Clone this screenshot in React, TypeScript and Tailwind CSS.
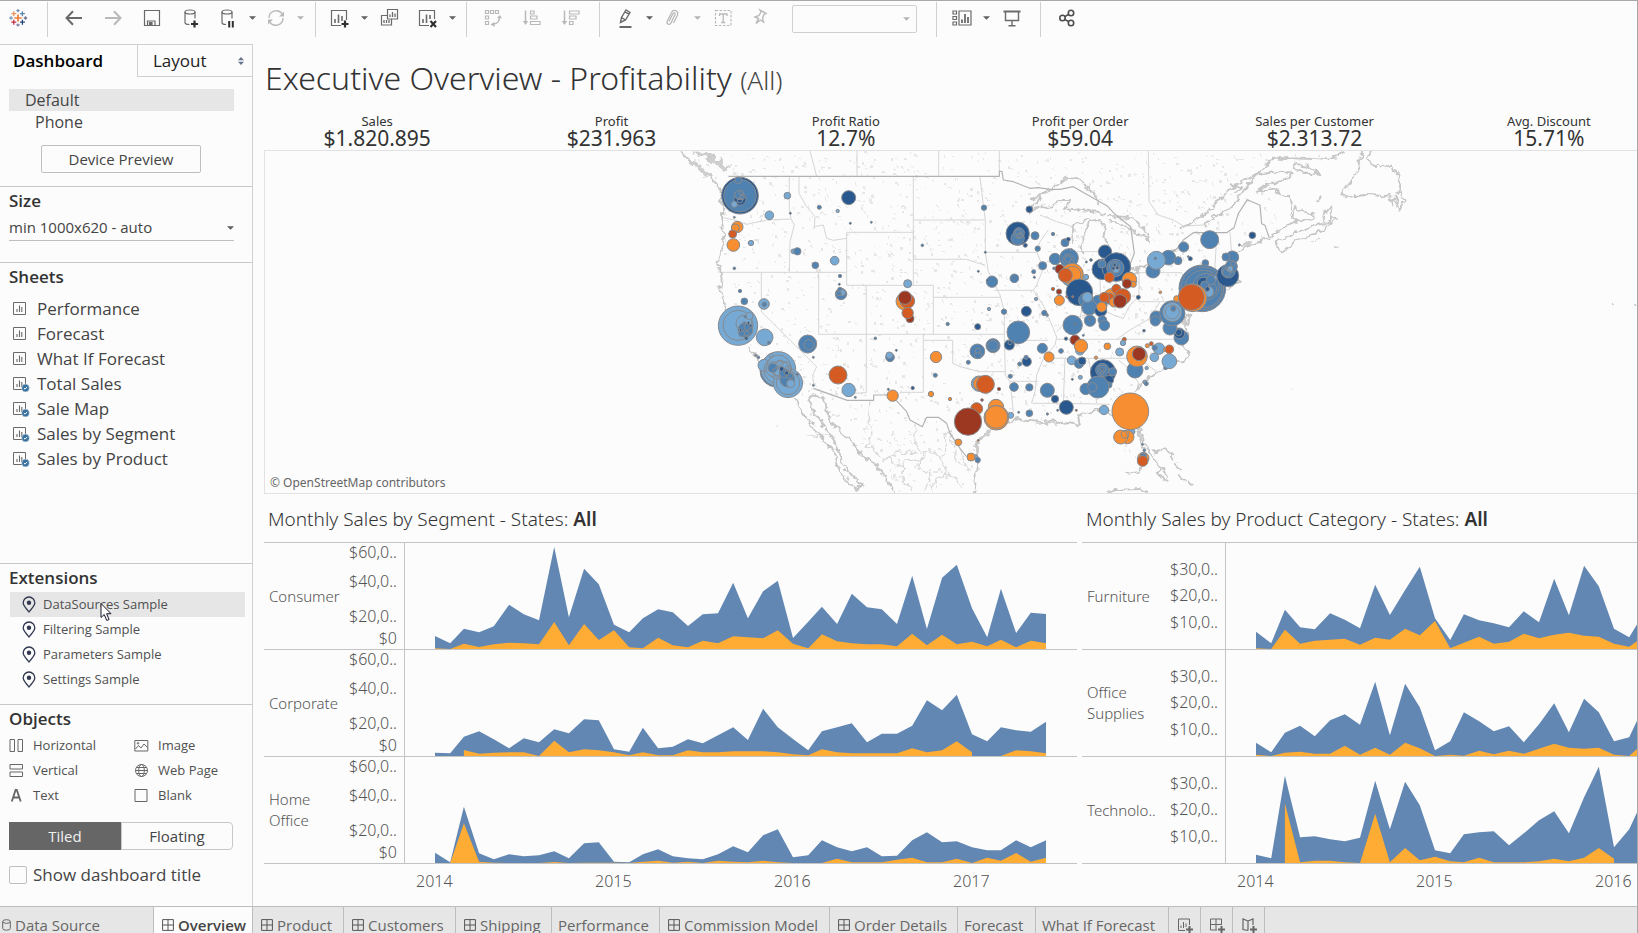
import React from "react";

/* ---------- shared pieces ---------- */

const UI = "font-['Open_Sans','Noto_Sans',sans-serif]";
const VIZ = "font-['Noto_Sans','Open_Sans',sans-serif]";

function Caret({ light = false }: { light?: boolean }) {
  return (
    <svg viewBox="0 0 8 4" className={`h-1 w-[7px] ${light ? "fill-[#b4b4b4]" : "fill-[#5f5f5f]"}`} aria-hidden="true">
      <path d="M0 0h8L4 4z" />
    </svg>
  );
}

function Icon({ children, light = false }: { children: React.ReactNode; light?: boolean }) {
  return (
    <svg
      viewBox="0 0 24 24"
      className={`h-6 w-6 fill-none ${light ? "stroke-[#b9b9b9]" : "stroke-[#6a6a6a]"}`}
      strokeWidth="1.2"
      aria-hidden="true"
    >
      {children}
    </svg>
  );
}

function Tool({ label, w = "w-9", children }: { label: string; w?: string; children: React.ReactNode }) {
  return (
    <button type="button" aria-label={label} className={`flex h-8 shrink-0 items-center justify-center ${w}`}>
      {children}
    </button>
  );
}

const GROUP = "flex h-[35px] shrink-0 items-start border-l border-[#d0d0d0]";

/* ---------- toolbar ---------- */

function Cross({ x, y, r, c, w = 1.3 }: { x: number; y: number; r: number; c: string; w?: number }) {
  return <path d={`M${x - r} ${y}h${2 * r}M${x} ${y - r}v${2 * r}`} stroke={c} strokeWidth={w} />;
}

function Toolbar() {
  return (
    <header className="flex h-[43px] shrink-0 items-start pt-px">
      <div className="flex h-8 w-[47px] shrink-0 items-center pl-1.5">
        <Icon>
          <Cross x={12} y={12} r={3.6} c="#eb7a38" w={1.7} />
          <Cross x={12} y={4.6} r={1.6} c="#6f8fb5" />
          <Cross x={12} y={19} r={1.6} c="#7b83a8" />
          <Cross x={5} y={12} r={1.7} c="#7b9bb8" />
          <Cross x={19.5} y={12} r={1.7} c="#6d7394" />
          <Cross x={7.8} y={7.7} r={2.5} c="#e8935a" />
          <Cross x={16.4} y={7.7} r={2.5} c="#5a83a8" />
          <Cross x={7.8} y={16.2} r={2.5} c="#c22d41" />
          <Cross x={16.4} y={16.2} r={2.5} c="#25497c" />
        </Icon>
      </div>

      <div className={`${GROUP} pl-1.5 pr-[9px]`}>
        <Tool label="Undo" w="w-[39px]">
          <Icon><path d="M20 12H5M11 5.2L4.5 12l6.500 6.800" strokeWidth="2" /></Icon>
        </Tool>
        <Tool label="Redo" w="w-[39px]">
          <Icon light><path d="M4 12h15M13 5.200L19.500 12 13 18.800" strokeWidth="2" /></Icon>
        </Tool>
        <Tool label="Save" w="w-[39px]">
          <Icon><path d="M4.500 4.500h15v15h-15zM7.500 19.500v-4.500h7.500v4.500" /><path d="M9.500 19.500v-3h2.500v3z" className="fill-[#6a6a6a]" /></Icon>
        </Tool>
        <Tool label="New data source" w="w-[39px]">
          <Icon>
            <ellipse cx="11" cy="6" rx="5" ry="2" />
            <path d="M6 6v10.500c0 1.200 2 2 4.500 2M16 6v6.500" />
            <path d="M15.500 14.500v7M12 18h7" className="stroke-[#303030]" strokeWidth="2.200" />
          </Icon>
        </Tool>
        <Tool label="Pause auto updates">
          <Icon>
            <ellipse cx="11" cy="6" rx="5" ry="2" />
            <path d="M6 6v10.500c0 1.200 1.500 2 4 2M16 6v6.500" />
            <path d="M13.200 15v6.500M16.800 15v6.500" className="stroke-[#303030]" strokeWidth="2" />
          </Icon>
        </Tool>
        <Tool label="Auto update options" w="w-3"><Caret /></Tool>
        <Tool label="Run update">
          <Icon light>
            <path d="M5 12a7.200 7.200 0 0 1 13-4.300M19 12a7.200 7.200 0 0 1-13 4.300" strokeWidth="1.400" />
            <path d="M20 5.500v5h-5zM4 18.500v-5h5z" className="fill-[#b9b9b9] stroke-none" />
          </Icon>
        </Tool>
        <Tool label="Update options" w="w-3"><Caret light /></Tool>
      </div>

      <div className={`${GROUP} pl-1.5 pr-2`}>
        <Tool label="New worksheet">
          <Icon>
            <path d="M18.500 14V4.500h-15v15H13" />
            <path d="M7 17v-4M10.500 17V8.500M14 15v-5" strokeWidth="1.600" />
            <path d="M17 14.500v7M13.500 18h7" className="stroke-[#303030]" strokeWidth="2.200" />
          </Icon>
        </Tool>
        <Tool label="New worksheet options" w="w-3"><Caret /></Tool>
        <Tool label="Duplicate" w="w-10">
          <Icon>
            <path d="M9.500 3.500h10v9.500h-10zM9.500 9.500h-6V19h10v-6" />
            <path d="M12 11V8.500M14.500 11V6M17 11V7.500M6 17v-3M8.500 17v-3M11 17v-3" strokeWidth="1.300" />
          </Icon>
        </Tool>
        <Tool label="Clear sheet">
          <Icon>
            <path d="M18.500 13V4.500h-15v15H13" />
            <path d="M7 17v-4M10.500 17V8.500M14 13v-4" strokeWidth="1.600" />
            <path d="M14.500 15l5.500 6M20 15l-5.500 6" className="stroke-[#303030]" strokeWidth="2.100" />
          </Icon>
        </Tool>
        <Tool label="Clear options" w="w-3"><Caret /></Tool>
      </div>

      <div className={`${GROUP} pl-1.5 pr-[9px]`}>
        <Tool label="Swap rows and columns" w="w-[39px]">
          <Icon light>
            <path d="M4.500 4.500h3v3h-3zM9.500 4.500h3v3h-3zM14.500 4.500h3v3h-3zM4.500 10h3v3h-3zM4.500 15.500h3v3h-3z" />
            <path d="M18.500 10.500c.3 4-2 7.500-7 8" strokeWidth="1.500" />
            <path d="M16 12l2.800-3 2.200 3.200zM13.500 16v5l-4-2.500z" className="fill-[#b9b9b9] stroke-none" />
          </Icon>
        </Tool>
        <Tool label="Sort ascending" w="w-[39px]">
          <Icon light>
            <path d="M5.500 4.500v13" strokeWidth="1.500" />
            <path d="M2.800 15h5.400l-2.700 4z" className="fill-[#b9b9b9] stroke-none" />
            <path d="M10.500 5h3.500v3h-3.500zM10.500 10h6.500v3h-6.500zM10.500 15.500h9.500v3h-9.500z" />
          </Icon>
        </Tool>
        <Tool label="Sort descending" w="w-[39px]">
          <Icon light>
            <path d="M5.500 4.500v13" strokeWidth="1.500" />
            <path d="M2.800 15h5.400l-2.700 4z" className="fill-[#b9b9b9] stroke-none" />
            <path d="M10.500 5h9.500v3h-9.500zM10.500 10h6.500v3h-6.500zM10.500 15.500h3.500v3h-3.500z" />
          </Icon>
        </Tool>
      </div>

      <div className={`${GROUP} pl-[7px] pr-[19px]`}>
        <Tool label="Highlight">
          <Icon>
            <path d="M7.500 16.500l1-5 4.500-7.500 4 2.500-4.500 7.500-5 2.500zM8.500 11.500l4 2.500M12 5.800l4 2.400" strokeWidth="1.400" />
            <path d="M6.500 21h12" strokeWidth="2" />
          </Icon>
        </Tool>
        <Tool label="Highlight options" w="w-3"><Caret /></Tool>
        <Tool label="Group members">
          <Icon light>
            <path d="M8 15.500l4-8c.7-1.300 2.600-.5 2 1l-4 8.500c-1.300 2.700-5 1-3.800-1.700l4.500-9C12.200 3 17.800 4.500 16.500 9l-4 8" strokeWidth="1.300" />
          </Icon>
        </Tool>
        <Tool label="Group options" w="w-3"><Caret light /></Tool>
        <Tool label="Show mark labels" w="w-10">
          <Icon light>
            <path d="M4.500 4.500h15.500v15h-15.500z" strokeDasharray="2.500 1.500" />
            <path d="M8.500 10V8h7.500v2M12.200 8v8.500M10.200 16.500h4" strokeWidth="1.300" />
          </Icon>
        </Tool>
        <Tool label="Fix axes">
          <Icon light>
            <path d="M11 4l6 3.500-2 .8-1.500 4 1 3.700-3.300-2-4.200 3.500 2.500-5-3.500-1.500 4-1.500 2-3.500z" strokeWidth="1.400" />
          </Icon>
        </Tool>
        <div className="relative ml-[13px] mt-[3px] h-7 w-[125px]">
          <select aria-label="Fit" disabled className="h-7 w-full appearance-none rounded-xs border border-[#d0d0d0] bg-[#fcfcfc]" />
          <span className="pointer-events-none absolute right-[7px] top-3"><Caret light /></span>
        </div>
      </div>

      <div className={`${GROUP} pl-[7px] pr-2`}>
        <Tool label="Show cards">
          <Icon>
            <path d="M3 5h3.500v3H3zM3 10.500h3.500v3H3zM3 16h3.500v3H3zM9 5h12v14H9z" />
            <path d="M12 17v-3.500M15 17V8M18 17v-6" strokeWidth="1.800" />
          </Icon>
        </Tool>
        <Tool label="Card options" w="w-3"><Caret /></Tool>
        <Tool label="Presentation mode" w="w-10">
          <Icon><path d="M5.500 6v8.500h13V6M12 14.500v5M8.500 19.700h7" strokeWidth="1.400" /><path d="M3.500 5.500h17" strokeWidth="2" /></Icon>
        </Tool>
      </div>

      <div className={`${GROUP} pl-1.5`}>
        <Tool label="Share" w="w-10">
          <Icon>
            <g className="stroke-[#4d4d4d]" strokeWidth="1.600">
              <circle cx="7.500" cy="12" r="2.700" /><circle cx="16" cy="7" r="2.700" /><circle cx="16" cy="17" r="2.700" />
              <path d="M9.800 10.600l4-2.300M9.800 13.400l4 2.300" />
            </g>
          </Icon>
        </Tool>
      </div>
    </header>
  );
}

/* ---------- side pane ---------- */

const SHEETS: [string, boolean][] = [
  ["Performance", false], ["Forecast", false], ["What If Forecast", false], ["Total Sales", true],
  ["Sale Map", true], ["Sales by Segment", true], ["Sales by Product", true],
];

function SheetIcon({ used }: { used: boolean }) {
  return (
    <svg viewBox="0 0 17 16" className="h-4 w-[17px] fill-none stroke-[#6a6a6a]" aria-hidden="true">
      <path d="M.5 1.500h12v12H.5z" />
      <path d="M4 11V8M6.500 11V4.500M8.800 11V6" strokeWidth="1.100" />
      {used && (
        <>
          <circle cx="12.500" cy="12" r="3.900" className="fill-[#38719f] stroke-[#fcfcfc]" strokeWidth=".5" />
          <path d="M10.900 12l1.200 1.200 2-2.300" className="stroke-white" strokeWidth="1" />
        </>
      )}
    </svg>
  );
}

function Pin() {
  return (
    <svg viewBox="0 0 14 17" className="h-[17px] w-3.5 fill-none stroke-[#30374f]" strokeWidth="1.300" aria-hidden="true">
      <path d="M7 16C5 13 1.200 10.300 1.200 6.800a5.800 5.800 0 0 1 11.600 0C12.800 10.300 9 13 7 16z" />
      <circle cx="7" cy="6.800" r="2.200" className="fill-[#30374f] stroke-none" />
    </svg>
  );
}

const OBJECT_ICONS: Record<string, React.ReactNode> = {
  Horizontal: <path d="M1 1.500h4.500v12H1zM9 1.500h4.500v12H9z" />,
  Vertical: <path d="M1 1.500h12.500V6H1zM1 9h12.500v4.500H1z" />,
  Text: <path d="M2.800 13.500L6.600 2h1.200l3.900 11.500M4.300 9.500h6" strokeWidth="1.800" />,
  Image: <><path d="M.8 2.500h13v10.500h-13z" /><path d="M1.500 11l3-3.500 2.500 2.500 3-4 3.500 3.500" /><circle cx="4" cy="5.300" r=".8" /></>,
  "Web Page": <><circle cx="7.500" cy="7.500" r="6" /><ellipse cx="7.500" cy="7.500" rx="2.800" ry="6" /><path d="M1.500 7.500h12M2.500 4.500h10M2.500 10.500h10" /></>,
  Blank: <path d="M1 1.500h12v12H1z" />,
};

function ObjectItem({ name }: { name: string }) {
  return (
    <button type="button" className="flex h-[25px] items-center gap-[9px] text-left text-[13px] text-[#505050]">
      <svg viewBox="0 0 15 15" className="h-[15px] w-[15px] fill-none stroke-[#666]" aria-hidden="true">{OBJECT_ICONS[name]}</svg>
      {name}
    </button>
  );
}

const HEAD = "text-[17px] leading-6 font-semibold text-[#333]";

function SidePane() {
  return (
    <aside className="flex w-[253px] shrink-0 flex-col border-r border-t border-[#d0d0d0]">
      <div className="flex h-8 shrink-0">
        <button type="button" className="w-[137px] pl-[13px] text-left text-[17px] font-semibold text-black">Dashboard</button>
        <button type="button" className="flex flex-1 items-center justify-between border-b border-l border-[#d0d0d0] pl-[15px] pr-2 text-[17px] text-[#222]">
          Layout
          <svg viewBox="0 0 6 8" className="h-2 w-1.5 fill-[#64748b]" aria-hidden="true"><path d="M0 3.300L3 0l3 3.300zM0 4.700L3 8l3-3.300z" /></svg>
        </button>
      </div>

      <div className="flex h-[110px] shrink-0 flex-col border-b border-[#c8c8c8] pl-[9px] pt-3 text-base text-[#444]">
        <button type="button" className="h-[22px] w-[225px] bg-[#e6e6e6] pl-4 text-left leading-[22px]">Default</button>
        <button type="button" className="h-[22px] w-[225px] pl-[26px] text-left leading-[22px]">Phone</button>
        <button type="button" className="ml-8 mt-3 h-7 w-40 rounded-xs border border-[#bfbfbf] text-[15px]">Device Preview</button>
      </div>

      <div className="h-[76px] shrink-0 border-b border-[#c8c8c8] pl-[9px] pt-0.5">
        <label htmlFor="size" className={`block ${HEAD}`}>Size</label>
        <div className="relative w-[225px]">
          <select id="size" className="h-7 w-full appearance-none border-b border-[#bfbfbf] bg-transparent pt-0.5 text-[15px] text-[#444]">
            <option>min 1000x620 - auto</option>
          </select>
          <span className="pointer-events-none absolute right-0 top-[13px]"><Caret /></span>
        </div>
      </div>

      <section className="min-h-0 flex-1 pl-[9px] pt-0.5">
        <h2 className={HEAD}>Sheets</h2>
        <ul className="pt-[7px]">
          {SHEETS.map(([name, used]) => (
            <li key={name}>
              <button type="button" className="flex h-[25px] items-center gap-[7px] pl-1 text-[17px] text-[#444]">
                <SheetIcon used={used} />{name}
              </button>
            </li>
          ))}
        </ul>
      </section>

      <section className="h-[141px] shrink-0 border-t border-[#c8c8c8] pl-2.5 pt-0.5">
        <h2 className={`-ml-px ${HEAD}`}>Extensions</h2>
        <ul className="pt-0.5">
          {["DataSources Sample", "Filtering Sample", "Parameters Sample", "Settings Sample"].map((name, i) => (
            <li key={name} className="relative">
              <button type="button" className={`flex h-[25px] w-[235px] items-center gap-[7px] pl-3 text-[13px] text-[#505050] ${i === 0 ? "bg-[#e6e6e6]" : ""}`}>
                <Pin />{name}
              </button>
              {i === 0 && (
                <svg viewBox="0 0 13 20" className="absolute left-[90px] top-2.5 h-5 w-[13px] fill-white stroke-[#1a1a2e]" aria-hidden="true">
                  <path d="M1 1.500v14l3.200-3 2.600 6 2.300-1-2.500-5.800H11z" />
                </svg>
              )}
            </li>
          ))}
        </ul>
      </section>

      <section className="h-[202px] shrink-0 border-t border-[#c8c8c8] pl-[9px] pt-0.5">
        <h2 className={HEAD}>Objects</h2>
        <div className="grid grid-cols-[125px_100px] pt-0.5">
          {["Horizontal", "Image", "Vertical", "Web Page", "Text", "Blank"].map((n) => <ObjectItem key={n} name={n} />)}
        </div>
        <div className="mt-3.5 flex h-7 w-[224px] text-[15px]">
          <button type="button" className="w-28 bg-[#666] text-[#f0f0f0]">Tiled</button>
          <button type="button" className="w-28 rounded-r-sm border border-[#c8c8c8] text-[#444]">Floating</button>
        </div>
        <label className="mt-[13px] flex items-center gap-1.5 text-[17px] leading-6 text-[#444]">
          <input type="checkbox" className="h-[18px] w-[18px] appearance-none rounded-xs border border-[#bfbfbf]" />
          Show dashboard title
        </label>
      </section>
    </aside>
  );
}

/* ---------- bubble map ---------- */

type Tone = "D" | "M" | "L" | "O" | "R" | "B" | "N";
const TONES: Record<Tone, string> = { D: "#28588e", M: "#4f81b1", L: "#76a9d3", O: "#f78f32", R: "#d45b21", B: "#9c3821", N: "none" };
type Bubble = [number, number, number, Tone];

const WEST: Bubble[] = [
  [240,152,55,"D"],[240,152,49,"M"],[235,106,10,"M"],[240,163,18,"D"],[238,150,14,"M"],[223,178,9,"L"],[243,143,6,"M"],[246,158,7,"M"],[240,166,8,"N"],
  [382,152,10,"L"],[328,211,13,"L"],[566,158,21,"D"],[478,187,6,"M"],[533,198,5,"L"],[391,205,3,"D"],[571,235,3,"D"],[634,232,3,"M"],[223,217,3,"M"],
  [232,246,17,"O"],[226,249,12,"O"],[218,267,12,"R"],[220,300,19,"O"],[273,294,8,"L"],[223,370,4,"M"],[400,319,7,"L"],[412,319,11,"M"],[466,361,10,"M"],[524,347,13,"L"],
  [540,393,5,"M"],[538,418,3,"D"],[543,447,17,"M"],[540,434,7,"M"],[547,443,9,"L"],[537,445,7,"M"],[743,416,12,"L"],[734,469,26,"O"],[742,468,22,"R"],[735,458,20,"B"],[750,521,12,"B"],[743,504,17,"R"],
  [240,438,5,"M"],[253,469,10,"M"],[312,477,16,"L"],[313,478,7,"M"],[234,542,59,"L"],[234,541,45,"L"],[252,535,24,"L"],[256,555,22,"M"],[268,513,11,"L"],[245,566,9,"M"],[262,545,10,"M"],[272,542,4,"D"],[265,534,4,"D"],[253,534,4,"M"],[256,515,4,"M"],[242,555,4,"D"],[259,580,5,"D"],[260,565,7,"M"],
  [314,577,25,"L"],[327,593,5,"M"],[287,631,3,"M"],[295,637,4,"M"],[443,597,27,"M"],[447,599,15,"N"],[460,637,3,"M"],[460,721,3,"M"],
  [349,677,49,"M"],[355,672,52,"L"],[312,661,18,"L"],[352,675,40,"N"],[384,714,44,"L"],[356,666,36,"L"],[340,672,22,"L"],[362,672,24,"L"],[384,714,35,"N"],[382,704,22,"M"],[392,716,12,"L"],[375,668,18,"N"],[338,669,14,"M"],[360,655,10,"N"],[350,680,12,"N"],[372,684,14,"M"],[385,672,10,"N"],[390,690,11,"N"],[365,672,7,"D"],[380,684,6,"D"],[412,688,3,"D"],[333,631,6,"L"],
  [534,690,27,"R"],[566,735,20,"L"],[586,757,3,"M"],[646,580,4,"M"],[709,616,3,"D"],[690,637,13,"M"],[688,631,10,"L"],[828,636,17,"O"],[826,691,6,"M"],[698,752,17,"O"],[685,733,3,"D"],[758,729,5,"D"],[813,747,8,"O"],[870,762,5,"O"],
  [787,301,4,"M"],[863,537,5,"M"],[953,545,9,"D"],[987,492,5,"L"],[1032,500,8,"M"],[1099,499,15,"D"],[1128,462,5,"L"],[1153,504,8,"M"],[1161,510,4,"M"],[972,188,8,"M"],[1108,193,10,"D"],
  [1073,266,35,"D"],[1073,280,20,"M"],[1077,264,16,"M"],[1075,262,9,"N"],[1080,270,7,"N"],[1074,272,5,"M"],[1125,272,12,"M"],[1096,301,6,"D"],[1133,311,8,"M"],[976,322,3,"D"],[955,379,3,"D"],[996,410,17,"M"],[982,406,3,"D"],[1063,400,13,"M"],[1061,398,3,"D"],[1148,362,12,"M"],[1121,380,6,"M"],[1123,397,3,"D"],
  [1075,562,34,"M"],[1048,600,15,"D"],[1050,593,6,"D"],[999,602,21,"M"],[999,602,15,"N"],[952,619,22,"M"],[954,630,11,"M"],[954,617,8,"M"],[925,652,6,"M"],[1147,610,15,"M"],[1100,650,14,"D"],[1098,637,6,"M"],[1079,657,6,"M"],[1051,694,6,"M"],[1062,726,13,"M"],[1108,727,11,"M"],[1162,736,21,"M"],
  [957,716,23,"L"],[962,716,22,"O"],[976,718,27,"R"],[1017,732,5,"B"],[966,765,4,"B"],[950,791,18,"R"],[924,830,41,"B"],[1008,786,23,"O"],[1052,811,9,"L"],[1009,818,37,"O"],[1009,816,34,"O"],[1076,802,3,"M"],[1108,805,10,"M"],[1162,807,3,"M"],
  [895,892,10,"O"],[955,886,3,"R"],[947,935,6,"L"],[933,936,12,"O"],[953,945,8,"M"],[1167,636,15,"O"],
];

const EAST: Bubble[] = [
  [69,267,5,"M"],[105,293,12,"M"],[115,283,6,"D"],[75,342,17,"M"],[117,339,28,"M"],[115,344,17,"M"],[114,342,10,"N"],[124,314,3,"M"],[72,370,4,"M"],
  [89,372,14,"B"],[124,394,31,"L"],[127,388,33,"O"],[127,390,26,"O"],[106,391,21,"R"],[168,396,8,"L"],[169,351,3,"D"],[183,345,4,"D"],[225,320,20,"D"],[217,373,31,"D"],[259,366,43,"D"],[256,369,26,"M"],[254,366,16,"M"],[258,374,10,"L"],[254,360,5,"D"],[262,368,5,"D"],[250,370,5,"D"],[216,357,12,"M"],
  [238,397,15,"R"],[298,404,22,"O"],[310,418,9,"O"],[291,416,14,"B"],[148,442,40,"D"],[69,432,5,"R"],[87,440,8,"B"],[88,466,15,"O"],[128,455,3,"R"],[110,455,3,"R"],
  [207,475,25,"M"],[168,466,22,"M"],[178,487,23,"M"],[172,457,15,"L"],[212,497,18,"D"],[215,486,15,"O"],[245,455,24,"O"],[259,432,14,"R"],[278,455,24,"R"],[238,460,16,"R"],[223,457,15,"R"],[252,472,14,"O"],[270,469,20,"B"],[325,457,6,"D"],
  [128,540,29,"M"],[136,538,3,"D"],[180,527,17,"M"],[178,523,3,"D"],[217,525,13,"M"],[223,541,16,"M"],[342,557,4,"D"],[108,581,5,"D"],[160,571,3,"M"],[150,617,13,"L"],[135,585,15,"B"],[153,603,20,"O"],[93,618,7,"M"],
  [283,583,6,"R"],[279,594,8,"L"],[232,604,10,"O"],[269,621,12,"L"],[198,638,5,"O"],[125,646,13,"L"],[147,656,14,"M"],[156,648,12,"D"],[219,682,38,"D"],[237,705,14,"D"],[217,675,20,"M"],[216,672,12,"N"],[216,672,4,"D"],[216,685,5,"M"],[248,680,12,"M"],[237,720,9,"M"],
  [204,726,33,"M"],[167,732,17,"M"],[187,727,14,"M"],[151,697,6,"L"],[127,703,3,"D"],[75,762,11,"D"],[109,787,21,"D"],[83,796,3,"D"],[139,796,3,"B"],[52,807,3,"M"],[222,795,14,"L"],
  [307,860,8,"L"],[301,799,55,"O"],[292,876,20,"O"],[272,876,21,"O"],[285,868,12,"N"],[337,898,3,"M"],[343,916,4,"M"],[340,939,17,"O"],[340,934,10,"M"],[338,948,16,"R"],[315,675,24,"M"],[321,634,31,"O"],[327,627,20,"B"],[350,669,5,"L"],[352,602,6,"O"],[364,596,6,"R"],
  [387,611,17,"L"],[374,608,8,"M"],[404,615,5,"O"],[418,613,13,"R"],[373,637,13,"L"],[407,668,6,"M"],[418,649,22,"L"],[345,711,6,"L"],[349,716,6,"M"],
  [454,578,22,"M"],[448,565,16,"D"],[446,562,10,"N"],[420,549,21,"M"],[379,517,19,"M"],[376,528,15,"M"],[427,505,38,"M"],[427,501,29,"L"],[427,501,21,"L"],[430,491,8,"M"],[391,442,4,"O"],
  [369,378,21,"M"],[415,338,22,"M"],[444,347,12,"M"],[379,346,27,"L"],[376,340,4,"M"],[461,306,15,"M"],[475,335,3,"M"],[481,341,6,"D"],[539,284,27,"M"],[526,354,10,"M"],
  [517,430,70,"M"],[517,430,64,"N"],[520,432,56,"M"],[528,425,40,"N"],[520,415,18,"D"],[538,432,22,"M"],[535,440,16,"L"],[524,420,12,"M"],[543,405,14,"M"],[532,432,7,"D"],[558,397,6,"L"],[440,461,9,"O"],[488,458,42,"O"],[484,457,39,"R"],
  [593,392,33,"D"],[607,337,19,"M"],[588,336,12,"M"],[595,378,21,"M"],[604,364,18,"M"],[600,372,9,"L"],[590,382,12,"N"],[609,357,7,"N"],[667,271,10,"D"],[628,300,3,"M"],
];

const LAND =
  "M65 18L155 105 180 130 188 200 190 300 175 345 185 400 180 440 195 470 190 500 262 610 300 645 345 705 400 755 420 790 440 820 470 880 520 915 530 960 590 1035 605 1020 560 975 540 930 490 840 455 790 447 750 495 760 500 800 525 845 575 890 610 935 650 960 708 1044H942L955 950 950 900 985 855 1040 830 1080 822 1140 838 1190 835 1240 797 1270 797 1305 822 1340 805 1360 840 1380 880 1395 920 1430 968 1448 962 1455 930 1445 880 1428 850 1410 780 1425 740 1470 695 1530 650 1585 625 1565 600 1585 570 1575 520 1630 490 1665 430 1738 410 1710 380 1710 340 1750 310 1828 278 1900 240 1880 160 1845 130 1790 140 1905 100 1900 88 1850 85 1790 110 1750 140 1710 180 1770 110 1840 40 1980 40 2050 18Z";

const NEWFOUNDLAND =
  "M2107 18l-8 30-9 32-22 30-20 35 7 12 30-4 45-3 40 4 20-4 5 30 10-25 5 20 10 22 13-35-10-20-12 5 15-22-13-18 6-20-14-15-6 10-10-18-8 8-8-14-12 10-10-12-8 10-12-16-14-4 18-36";

/* borders drawn heavier than the inner state lines */
const COUNTRY_LINES =
  "M205 94H1018V78l8 2 4 25 30 5 30 12 20 8 25-2 35 5 30 0 40-8 103 59 22 24 47 37 11 80-21 53M1450 365l50-25 50-28 20-27 30-22h100l22-15 13-42 27-42 38 17 5 55 10 5 13 38M460 730l102 36h79v-16h49l22 20 28 30 10 25 37 20 13-28h35l25 18 10 30 30 45 18 23 37 2";

const STATE_LINES =
  "M388 96v94l5 32M190 218l32 7 38 13 60-13 73-3M393 222l10 18-13 50-2 92M180 382h380M417 96v49l23 40 25 30-2 30 27-5 10 40 20 6 40-6M560 262h200v81M560 262v159h260v147M760 96v325M762 225h214M304 382v118l161 160 5 5-12 25 4 35M476 382v186h557M619 421v322l-57 3M790 568v174h-70M790 586h88v69l22 10 60 15h76M1033 500v68l3 122 14 20 10 90M760 343h160l30 10 25 7M820 457h200M960 96l10 84 6 46v96h154M976 322l9 58 35 70 13 50M1003 436h117l10-16 20-50-20-50 10-30 25-35M1120 436l30 45 30 70 10 25-5 24-35 40-20 50-5 50-10 35M1036 586h129M1050 709h85M1118 775h92M1215 640l-5 135 10 22M1190 583h375M1165 640h245M1285 640l20 100 5 35M1220 775l130 3M1375 645l30 25 35 50M1400 640l50 10 40 30M1370 583l40-28 60-35 30-50M1437 383h128M1437 383v87h113M1320 400l2 85M1270 400v70l-10 50M1160 350h90M1670 275l-5 85 5 70M1710 262l5 68M1670 375h60M1190 560l40-40 50-10 40-20 40 20 30 10 20-40 27-25M1565 383l20 40-10 50M450 18l8 30 12 46M591 18v76M836 18v76M1018 18v60M1465 18l2 152 28 40 45 15 30 18 60-3M1140 210l50 20 40 12 20 20M1250 320l70 0M1590 375l70 0";

const MEXICO_LINES =
  "M630 766l-5 50 8 50-15 40 30 15 25 20 20-5 15 30 40-20 30 10 20-30M768 850l-5 40 20 30 30 0 30 15 20-30-15-30 30-20M708 940l25 30 0 40 20 30M790 920l-15 50 35 20-15 50M845 940l10 40 30 20 20 30M670 950l40-28 60 0M860 980l-40 30-5 30M900 910l15 40 10 30M440 870l40 5 30-2M870 865l20 80 25 15";

const COAST_LINES =
  "M65 18l20 25 30 20 40 42 25 25 6 35 0 35 4 100-15 45 10 55-5 40 15 30-5 30M262 610l38 35 45 60M400 755l20 35 20 30 30 40 15 20 35 35 10 45 15 30 45 45 15-15-45-45-20-45-20-50-30-40-35-50-8-40 48 10 5 40 25 45 50 45 35 45 40 25 58 84M942 1044l13-94-5-50 35-45 55-25 40-8 50 13 30 3 20-16 30 16 30-8 20 10-5-25 55-18 30 0 35 25 35-17 20 35 20 40 15 40 35 48M1428 850l17 35 10 45M1425 740l45-45 40-20 40-25 30-10 5-25-20-15 20-30-10-50M1575 520l20-15-15 35M1630 490l35-60 30 0 43-20-28-30 0-40 40-30 78-32M1828 278l62-43 25-5-25-15 5-45-10-20 -20 0-20-20-55 10 30-20 70-20 5-15-40-5-75 10-60 35-35 30-40 45-80 50M1630 240l90-60 50-70 60-60 10-12 140 5 50-5 20-20M1850 295l15 27 35-30 40-14 55-28 35-30-15-10-10 25-45 5-50 22-50 23zM1905 185l20 15 35 5 5 15-40 10-25-15zM1990 230l5-25 15-25 3 20-8 30zM1900 55l40 7 38 23-28 3-40-18zM1970 170l17-17M1710 120l35 10-20 15M1110 190l30-30 25-30M1110 165l60-25 50-42 45 7 20 30 25 15 5 34M1110 205l20-20 40 0 40-20 20 0-15 25 45 5 50 5 25 10M1270 325l-3-45 18-45 35-10 15 20-5 35 20 20M1235 300l5-60 20-10 30-10M1345 215l75 5 35 40 15 25-30-15-40-25-45-15M1372 378l38-3 40-10-30 20-40 10M1480 335l70-20M1390 986l20 0 35-10 2-10M1480 920l35-8 20 10 2 20M1340 1042l40-8 60-2 30 10M1500 965l20 25 3 20-15-5-12-20zM1545 955l20 20M1555 990l20 20M1585 1005l15 15M2025 305h12M1890 733l5-3M2856 477h5M2922 477h8";

const ISLANDS =
  "M68 20l30 28 25 16 20 22 16 18-20-8-24-24-28-20zM100 20l30 10 8-8 14 8-4 8-26-4zM140 40l22-8 6 12 18-2 2 12-16 4-10-8-8 8zM172 62l14-6 8 10 20 0-14 10-14-6zM955 880l15-10 20-20-5 18-20 15zM1740 300l20-5 15-12-10 22zM1450 965l8-5M940 900l12 20-3 25M1690 385l12 15-4 20M1430 725l12-4-4 12zM350 838l6 8M1570 525l10-10-8 25M1150 825l14 6-4 10zM1174 832l12-6 4 12M1960 290l20-10M1180 180l10-6";

/* Small pale patches scattered over the land. */
function makeSpecks() {
  let s = 20417;
  const rnd = () => {
    s = (s + 0x6d2b79f5) | 0;
    let t = Math.imul(s ^ (s >>> 15), 1 | s);
    t = (t + Math.imul(t ^ (t >>> 7), 61 | t)) ^ t;
    return ((t ^ (t >>> 14)) >>> 0) / 4294967296;
  };
  let d = "";
  for (let i = 0; i < 2600; i++) {
    const x = 3 * Math.round(rnd() * 670 + 20);
    const y = 3 * Math.round(rnd() * 340 + 6);
    const w = 3 * Math.ceil(rnd() * 2.6);
    const h = 3 * Math.ceil(rnd() * 2.6);
    d += `M${x} ${y}h${w}v${h}h${-w}z`;
    if (rnd() > 0.6) d += `M${x + w} ${y + h}h3v3h-3z`;
  }
  return d;
}
const SPECKS = makeSpecks();

function Bubbles({ data, dx = 0 }: { data: Bubble[]; dx?: number }) {
  return (
    <g stroke="#878a8f" strokeWidth="3">
      {data.map(([x, y, r, t], i) => <circle key={i} cx={x + dx} cy={y} r={r} fill={TONES[t]} />)}
    </g>
  );
}

function MapView() {
  return (
    <div className="relative ml-[11px] h-[344px] shrink-0 border-y border-l border-[#e2e2e2]">
      <svg viewBox="-1185 18 4116 1026" preserveAspectRatio="xMidYMid slice" className="h-full w-full" role="img" aria-label="Sales map">
        <clipPath id="land"><path d={LAND} /><path d={NEWFOUNDLAND} /></clipPath>
        <filter id="ragged" x="-2%" y="-2%" width="104%" height="104%">
          <feTurbulence type="fractalNoise" baseFrequency="0.05" numOctaves="2" seed="3" />
          <feDisplacementMap in="SourceGraphic" scale="24" xChannelSelector="R" yChannelSelector="G" />
        </filter>
        <path d={SPECKS} fill="#e7e7e7" clipPath="url(#land)" />
        <g className="fill-[#fcfcfc]">
          <path d="M1110 205l50-62 60-45 45 7 45 45 5 34-15 16-60-5-70-25zM1267 325l0-45 18-45 35-10 15 20-5 75zM1345 215l75 5 35 40 15 25-30-10-50-30zM1372 378l78-13-30 20z" />
        </g>
        <g fill="none" strokeLinejoin="round">
          <path d={STATE_LINES} stroke="#d6d6d6" strokeWidth="3" />
          <g filter="url(#ragged)">
            <path d={MEXICO_LINES} stroke="#d8d8d8" strokeWidth="3.500" />
            <path d={COAST_LINES} stroke="#c6c6c6" strokeWidth="5.500" />
            <path d={NEWFOUNDLAND} stroke="#c6c6c6" strokeWidth="5.500" />
            <path d={ISLANDS} fill="#cfcfcf" stroke="#c9c9c9" strokeWidth="3" />
          </g>
          <path d={COUNTRY_LINES} stroke="#b2b2b2" strokeWidth="3.500" />
        </g>
        <Bubbles data={WEST} />
        <Bubbles data={EAST} dx={1110} />
      </svg>
      <p className="absolute bottom-0.5 left-[5px] text-xs leading-4 text-[#666]">© OpenStreetMap contributors</p>
    </div>
  );
}

/* ---------- area charts ---------- */

type Series = (number | null)[];
type RowData = { name: string; total: Series; loss: Series };

const SEGMENTS: RowData[] = [
  { name: "Consumer",
    total: [40,18,62,51,69,134,105,87,307,96,242,195,74,51,93,120,111,70,105,108,200,93,174,206,34,83,128,76,167,126,120,76,221,61,215,254,123,36,182,49,110,106],
    loss: [3,0,17,7,15,20,18,15,82,12,76,28,57,6,3,35,12,6,26,18,39,36,33,57,17,3,45,24,18,15,15,9,47,12,44,15,23,9,29,6,26,18] },
  { name: "Corporate",
    total: [11,9,59,75,51,24,54,42,81,69,111,108,21,14,86,24,29,51,39,63,87,49,143,87,52,18,75,87,99,42,68,68,92,168,138,185,66,45,87,78,74,104],
    loss: [null,null,19,8,11,12,12,0,47,12,21,18,12,3,12,3,3,18,12,12,15,15,15,12,6,3,21,12,9,9,9,9,24,12,18,45,12,null,0,18,15,9] },
  { name: "Home Office",
    total: [32,3,170,30,12,27,21,24,36,15,60,63,5,3,27,42,21,15,12,27,51,33,84,102,18,24,69,48,36,48,21,23,69,93,63,66,48,39,39,69,48,69],
    loss: [null,0,120,5,2,0,0,0,4,0,2,2,2,0,5,8,2,5,0,8,5,3,8,3,0,0,0,14,3,3,3,11,17,3,3,14,0,17,8,31,5,17] },
];

const CATEGORIES: RowData[] = [
  { name: "Furniture",
    total: [53,18,119,66,60,108,89,63,194,103,178,248,93,28,105,87,78,66,114,81,212,102,251,189,62,36,103],
    loss: [3,0,59,17,26,29,32,14,35,29,62,42,85,3,20,38,17,23,47,33,44,50,41,38,17,8,36] },
  { name: "Office Supplies",
    total: [41,12,71,92,60,108,126,95,224,63,218,147,18,45,132,105,75,90,42,96,159,72,173,132,45,57,144],
    loss: [5,0,11,14,8,8,32,5,26,5,41,24,0,5,2,17,6,17,8,23,38,26,23,26,5,1,38] },
  { name: "Technolo..",
    total: [26,15,263,78,81,72,66,77,248,102,245,174,39,30,87,93,96,54,90,129,156,90,198,290,48,102,190],
    loss: [null,null,180,3,8,8,3,0,149,3,46,9,20,6,3,17,3,3,3,6,14,6,17,46,14,null,null] },
];

const MONTH_START = [0, 31, 59, 90, 120, 151, 181, 212, 243, 273, 304, 334];
const PLOT_H = 106;
const monthX = (i: number) => 30 + (Math.floor(i / 12) * 365 + MONTH_START[i % 12]) * 0.4904;

function areaPath(values: Series) {
  let d = "";
  let open = false;
  let last = 0;
  values.forEach((v, i) => {
    const x = monthX(i).toFixed(1);
    if (v === null) {
      if (open) d += `L${monthX(last).toFixed(1)} ${PLOT_H}Z`;
      open = false;
      return;
    }
    if (!open) d += `M${x} ${PLOT_H}`;
    d += `L${x} ${(PLOT_H - Math.max(0, v - 1) / 3).toFixed(1)}`;
    open = true;
    last = i;
  });
  return open ? `${d}L${monthX(last).toFixed(1)} ${PLOT_H}Z` : d;
}

function AreaPanel({ title, rows, ticks, tickGrid, labelCol, years, className }: {
  title: string; rows: RowData[]; ticks: string[]; tickGrid: string; labelCol: string; years: number[]; className: string;
}) {
  return (
    <section className={`overflow-hidden ${className}`}>
      <h2 className="h-[48px] whitespace-nowrap pl-1 pt-[13px] text-[19px] leading-6 font-light text-[#333]">
        {title} - States: <b className="font-semibold">All</b>
      </h2>
      <div className="border-t border-[#c4c4c4]">
        {rows.map((row) => (
          <div key={row.name} className="flex h-[107px] border-b border-[#c4c4c4] font-light text-[#555]">
            <div className={`flex shrink-0 border-r border-[#c4c4c4] ${labelCol}`}>
              <div className="flex w-[72px] items-center pl-[5px] text-[15px] leading-[21px]">{row.name}</div>
              <div className={`grid flex-1 pr-[7px] text-base ${tickGrid}`}>
                {ticks.map((t) => <span key={t} className="flex items-center justify-end leading-[18px]">{t}</span>)}
              </div>
            </div>
            <svg viewBox="0 0 672 106" className="h-[106px] w-[672px] shrink-0" role="img" aria-label={row.name}>
              <path d={areaPath(row.total)} fill="#6287b3" />
              <path d={areaPath(row.loss)} fill="#feac33" />
            </svg>
          </div>
        ))}
      </div>
      <div className="flex h-[33px] text-base font-light text-[#555]">
        <div className={`shrink-0 ${labelCol}`} />
        <div className="flex items-center pl-[11px]">
          {years.map((y) => <span key={y} className="w-[179px] shrink-0">{y}</span>)}
        </div>
      </div>
    </section>
  );
}

/* ---------- dashboard ---------- */

const KPIS = [
  ["Sales", "$1.820.895"], ["Profit", "$231.963"], ["Profit Ratio", "12.7%"],
  ["Profit per Order", "$59.04"], ["Sales per Customer", "$2.313.72"], ["Avg. Discount", "15.71%"],
];

function Dashboard() {
  return (
    <main className={`flex min-w-0 flex-1 flex-col overflow-hidden ${VIZ}`}>
      <h1 className="h-[69px] shrink-0 whitespace-nowrap pl-3 pt-3.5 text-[32px] leading-10 font-light text-[#333]">
        Executive Overview - Profitability <span className="text-[26px] text-[#444]">(All)</span>
      </h1>
      <dl className="ml-[7px] grid h-[37px] w-[1406px] shrink-0 grid-cols-6">
        {KPIS.map(([k, v]) => (
          <div key={k} className="text-center text-[#333]">
            <dt className="text-[13px] leading-4">{k}</dt>
            <dd className="text-[21px] leading-[18px]">{v}</dd>
          </div>
        ))}
      </dl>
      <MapView />
      <div className="flex shrink-0 gap-[5px] pl-[11px]">
        <AreaPanel title="Monthly Sales by Segment" rows={SEGMENTS} ticks={["$60,0..", "$40,0..", "$20,0..", "$0"]}
          tickGrid="grid-rows-[17px_41px_29px_16px]" labelCol="w-[141px]" years={[2014, 2015, 2016, 2017]} className="w-[813px] shrink-0" />
        <AreaPanel title="Monthly Sales by Product Category" rows={CATEGORIES} ticks={["$30,0..", "$20,0..", "$10,0.."]}
          tickGrid="grid-rows-[27px_26px_27px] pt-3" labelCol="w-36" years={[2014, 2015, 2016]} className="min-w-0 flex-1" />
      </div>
    </main>
  );
}

/* ---------- sheet tabs ---------- */

const TABS: [string, boolean, string][] = [
  ["Product", true, "w-[91px]"], ["Customers", true, "w-28"], ["Shipping", true, "w-24"], ["Performance", false, "w-[108px]"],
  ["Commission Model", true, "w-[170px]"], ["Order Details", true, "w-32"], ["Forecast", false, "w-[78px]"], ["What If Forecast", false, "w-[133px]"],
];

function GridIcon() {
  return (
    <svg viewBox="0 0 12 12" className="h-3 w-3 shrink-0 fill-none stroke-[#555]" aria-hidden="true">
      <path d="M.6.6h10.800v10.800H.6zM6 .6v10.800M.6 6h10.800" />
    </svg>
  );
}

function SheetTabs() {
  const tab = "flex h-9 shrink-0 items-center gap-1 whitespace-nowrap border-r border-[#bdbdbd]";
  const plus = "M13.500 10v7M10 13.500h7";
  return (
    <nav className="flex h-[27px] shrink-0 overflow-hidden border-t border-[#bdbdbd] bg-[#e6e6e6] text-[15px] text-[#666]">
      <button type="button" className={`${tab} w-[154px] pl-0.5`}>
        <svg viewBox="0 0 9 12" className="h-3 w-[9px] fill-none stroke-[#666]" aria-hidden="true">
          <ellipse cx="4.500" cy="2.500" rx="3.800" ry="1.800" /><path d="M.7 2.500v7c0 2.200 7.600 2.200 7.600 0v-7" />
        </svg>
        Data Source
      </button>
      <button type="button" className={`${tab} w-[99px] bg-[#fcfcfc] pl-2 font-semibold text-[#444]`}><GridIcon />Overview</button>
      {TABS.map(([name, dash, w]) => (
        <button key={name} type="button" className={`${tab} ${w} ${dash ? "pl-2" : "pl-1.5"}`}>
          {dash && <GridIcon />}{name}
        </button>
      ))}
      <button type="button" aria-label="New worksheet" className={`${tab} w-8 justify-center`}>
        <svg viewBox="0 0 18 18" className="h-[18px] w-[18px] fill-none stroke-[#666]" aria-hidden="true"><path d="M13.500 9V3h-11v11.500H9M5 12V9.500M7.500 12V6M10 11V7.500" /><path d={plus} strokeWidth="2" /></svg>
      </button>
      <button type="button" aria-label="New dashboard" className={`${tab} w-8 justify-center`}>
        <svg viewBox="0 0 18 18" className="h-[18px] w-[18px] fill-none stroke-[#666]" aria-hidden="true"><path d="M13.500 9V3h-11v11H9M8 3v11M2.500 8.500h11" /><path d={plus} strokeWidth="2" /></svg>
      </button>
      <button type="button" aria-label="New story" className={`${tab} w-8 justify-center`}>
        <svg viewBox="0 0 18 18" className="h-[18px] w-[18px] fill-none stroke-[#666]" aria-hidden="true"><path d="M8 5L3 3v10.500l5 1M8 5l5-2v6M8 5v9.500" strokeWidth="1.200" /><path d={plus} strokeWidth="2" /></svg>
      </button>
    </nav>
  );
}

export default function App() {
  return (
    <div className={`flex h-screen flex-col overflow-hidden border-r border-t border-[#a8a8a8] bg-[#fcfcfc] ${UI}`}>
      <Toolbar />
      <div className="flex min-h-0 flex-1">
        <SidePane />
        <Dashboard />
      </div>
      <SheetTabs />
    </div>
  );
}
